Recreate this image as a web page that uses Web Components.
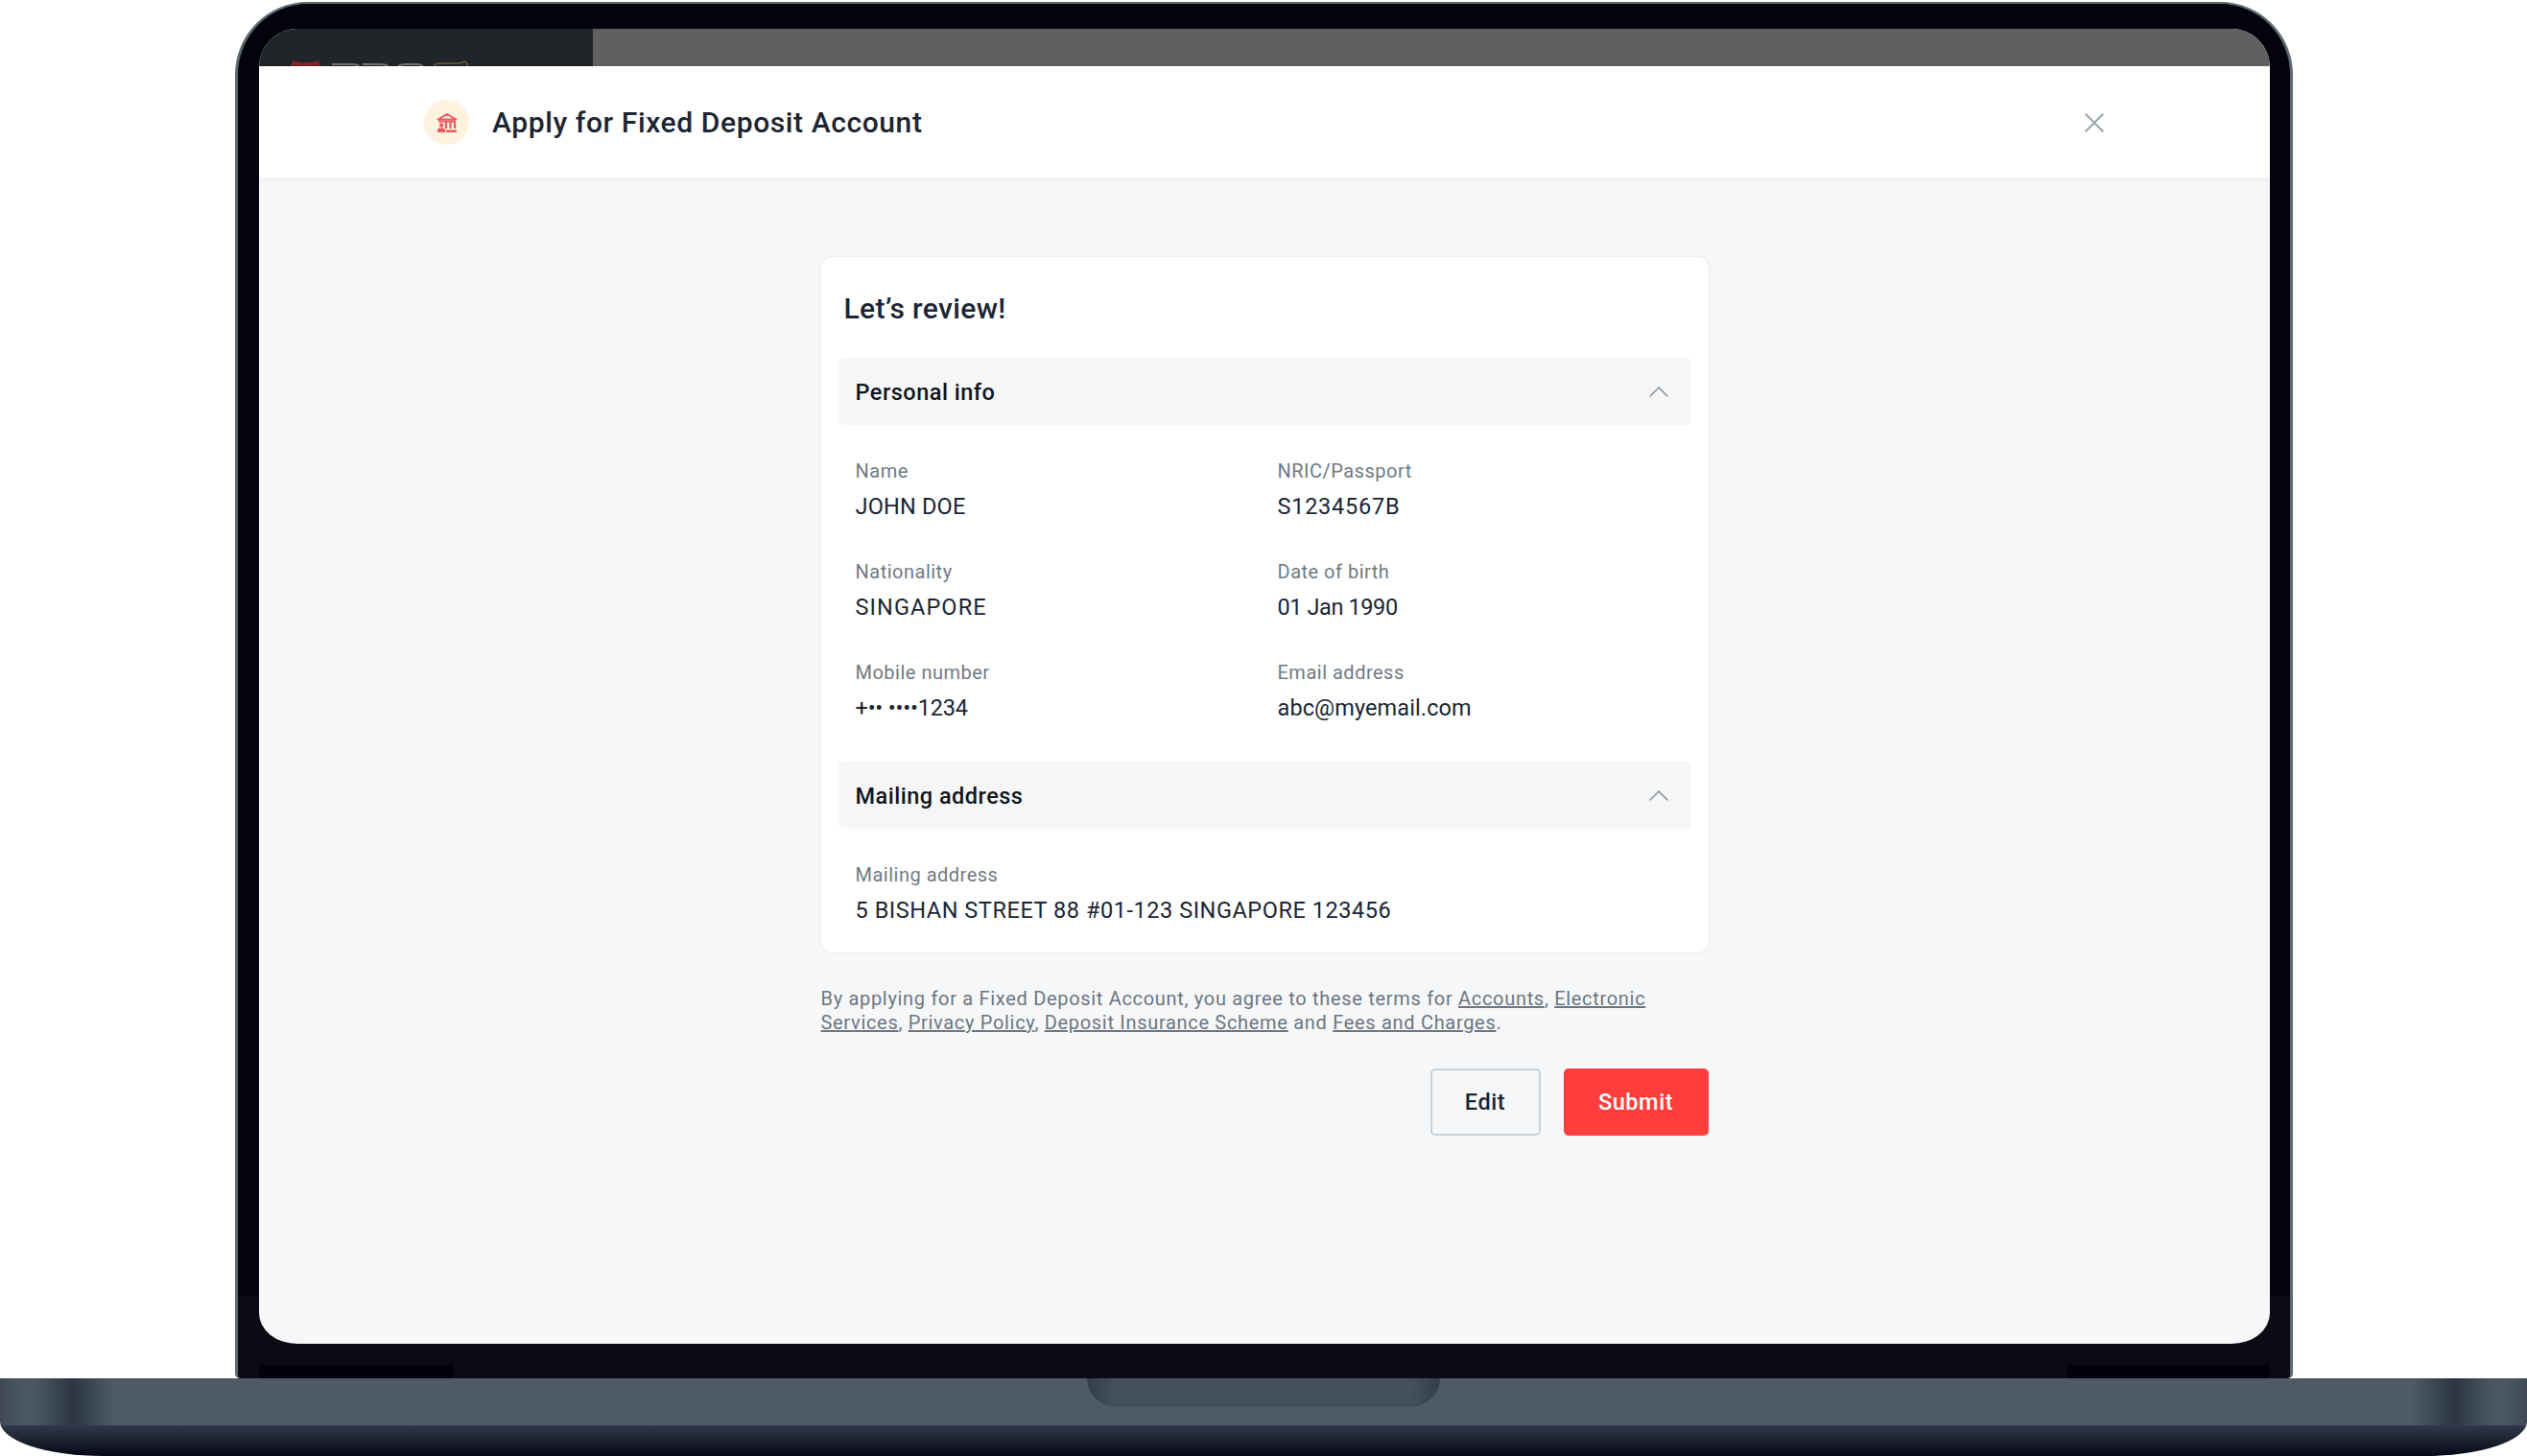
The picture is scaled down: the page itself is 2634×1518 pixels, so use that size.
<!DOCTYPE html>
<html>
<head>
<meta charset="utf-8">
<title>Apply for Fixed Deposit Account</title>
<style>
  html, body { margin: 0; background: #fff; overflow: hidden; }
  body { font-family: Roboto, "Liberation Sans", sans-serif; color: #1b2533; }
  a { color: inherit; }
</style>
</head>
<body>
<laptop-frame>
  <modal-header title="Apply for Fixed Deposit Account"></modal-header>
  <review-page>
    <review-card heading="Let’s review!">
      <review-section title="Personal info">
        <info-field label="Name" value="JOHN DOE"></info-field>
        <info-field label="NRIC/Passport" value="S1234567B" style="--track:.75px"></info-field>
        <info-field label="Nationality" value="SINGAPORE" style="--track:1.1px"></info-field>
        <info-field label="Date of birth" value="01 Jan 1990" style="--track:-.4px"></info-field>
        <info-field label="Mobile number" value="+•• ••••1234" style="--track:-.2px"></info-field>
        <info-field label="Email address" value="abc@myemail.com" style="--track:.1px"></info-field>
      </review-section>
      <review-section title="Mailing address">
        <info-field wide label="Mailing address" value="5 BISHAN STREET 88 #01-123 SINGAPORE 123456" style="--track:.55px"></info-field>
      </review-section>
    </review-card>
    <terms-note>By applying for a Fixed Deposit Account, you agree to these terms for <a href="#">Accounts</a>, <a href="#">Electronic</a> <a href="#">Services</a>, <a href="#">Privacy Policy</a>, <a href="#">Deposit Insurance Scheme</a> and <a href="#">Fees and Charges</a>.</terms-note>
    <form-actions>
      <action-button>Edit</action-button>
      <action-button primary>Submit</action-button>
    </form-actions>
  </review-page>
</laptop-frame>

<script>
class LaptopFrame extends HTMLElement {
    constructor() {
        super();
        this.attachShadow({mode: 'open'}).innerHTML = `
            <style>
                :host { display: flex; flex-direction: column; align-items: center; width: 2634px; height: 1518px; padding-top: 2px; box-sizing: border-box; }
                .bezel {
                    box-sizing: border-box;
                    width: 2145px;
                    height: 1435px;
                    margin-left: 1px;
                    padding: 26px 21px 36px 22px;
                    border: solid #5d6a70;
                    border-width: 2px 3px 0 3px;
                    border-radius: 76px 76px 5px 5px;
                    background:
                        linear-gradient(#02020c, #02020c) no-repeat left 22px bottom / 203px 14px,
                        linear-gradient(#02020c, #02020c) no-repeat right 21px bottom / 211px 14px,
                        linear-gradient(#02030c 0, #02030c 94%, #0a0b14 94%);
                }
                .screen {
                    display: flex;
                    flex-direction: column;
                    height: 100%;
                    overflow: hidden;
                    border-radius: 40px 40px 40px 40px / 40px 40px 32px 32px;
                    background: #f6f7f9;
                }
                .behind { display: flex; flex: 0 0 39px; overflow: hidden; }
                .side { flex: 0 0 348px; background: #1f2528; overflow: hidden; }
                .side svg { display: block; margin: 33px 0 0 33px; }
                .rest { flex: 1; background: #5f605f; }
                .base { flex: 0 0 81px; width: 2634px; overflow: hidden; border-radius: 0 0 107px 107px / 0 0 36px 36px; display: flex; flex-direction: column; }
                .top {
                    flex: 0 0 49px;
                    display: flex;
                    justify-content: center;
                    background: linear-gradient(90deg, #3f4a56 0, #4b5864 24px, #4b5864 36px, #2c3644 76px, #4e5b66 120px, #4e5b66 2514px, #2c3644 2558px, #4b5864 2598px, #4b5864 2610px, #3f4a56 100%);
                }
                .notch {
                    width: 368px;
                    height: 30px;
                    border-radius: 0 0 32px 32px / 0 0 30px 30px;
                    background: linear-gradient(90deg, #323e4b, #44515d 30px, #44515d 338px, #323e4b);
                }
                .bottom { flex: 1; background: linear-gradient(#2f3a4a, #060816); }
            </style>
            <div class="bezel">
                <div class="screen">
                    <div class="behind">
                        <div class="side">
                            <svg width="200" height="6" viewBox="0 0 200 6" fill="none">
                                <path d="M0 6 2 0l8 2h11l8-2 2 6z" fill="#7d2528"/>
                                <path d="M43 4h20q6 0 8 2M75 4h18q6 0 8 2M112 6q3-2 9-2h10q4 0 7 2" stroke="#6f7172" stroke-width="2"/>
                                <path d="M149 6q2-3 7-3h20l6-2M182 1l3 5" stroke="#5d4d36" stroke-width="2"/>
                            </svg>
                        </div>
                        <div class="rest"></div>
                    </div>
                    <slot></slot>
                </div>
            </div>
            <div class="base">
                <div class="top"><div class="notch"></div></div>
                <div class="bottom"></div>
            </div>
        `;
    }
}
customElements.define('laptop-frame', LaptopFrame);

class ModalHeader extends HTMLElement {
    connectedCallback() {
        this.attachShadow({mode: 'open'}).innerHTML = `
            <style>
                :host { display: flex; align-items: center; flex: 0 0 117px; box-sizing: border-box; padding: 0 173px 0 172px; background: #fff; box-shadow: 0 1px 4px rgba(30,40,60,.08); z-index: 1; }
                .badge { display: flex; align-items: center; justify-content: center; width: 47px; height: 47px; border-radius: 50%; background: #fff3e0; margin-right: 24px; }
                h1 { flex: 1; margin: 0; font: 500 30px/40px Roboto, sans-serif; letter-spacing: .6px; color: #1b2533; }
                .close { display: block; }
            </style>
            <div class="badge">
                <svg width="22" height="22" viewBox="0 0 22 22" fill="none" stroke="#ef5a60" stroke-width="2">
                    <path d="M1.500 7.500 11 2l9.500 5.500z" stroke-linejoin="round"/>
                    <path d="M2 9.500h18" />
                    <path d="M10 10v7M14.500 10v7M19 10v7" stroke-width="2.200"/>
                    <circle cx="5" cy="13.500" r="2.200" fill="#ef5a60" stroke="none"/>
                    <path d="M1 21v-2.500q0-2 2-2h4q2 0 2 2V21zM10 18.500h11V21H10z" fill="#ef5a60" stroke="none"/>
                </svg>
            </div>
            <h1>${this.getAttribute('title')}</h1>
            <svg class="close" width="20" height="20" viewBox="0 0 20 20" stroke="#98a4ad" stroke-width="2" fill="none"><path d="M.700.700l18.600 18.600M19.300.700L.700 19.300"/></svg>
        `;
    }
}
customElements.define('modal-header', ModalHeader);

class ReviewPage extends HTMLElement {
    constructor() {
        super();
        this.attachShadow({mode: 'open'}).innerHTML = `
            <style>
                :host { display: flex; flex-direction: column; flex: 1; width: 925px; margin: 0 auto; padding-top: 82px; }
            </style>
            <slot></slot>
        `;
    }
}
customElements.define('review-page', ReviewPage);

class ReviewCard extends HTMLElement {
    connectedCallback() {
        this.attachShadow({mode: 'open'}).innerHTML = `
            <style>
                :host { display: block; background: #fff; border-radius: 12px; padding: 0 18px 24px; box-shadow: 0 0 3px rgba(30,40,60,.1); }
                h2 { margin: 0; padding: 34px 0 0 6px; height: 105px; box-sizing: border-box; font: 500 30px/40px Roboto, sans-serif; color: #1b2533; letter-spacing: .35px; }
            </style>
            <h2>${this.getAttribute('heading')}</h2>
            <slot></slot>
        `;
    }
}
customElements.define('review-card', ReviewCard);

class ReviewSection extends HTMLElement {
    connectedCallback() {
        this.attachShadow({mode: 'open'}).innerHTML = `
            <style>
                :host { display: block; }
                .head { display: flex; align-items: center; justify-content: space-between; height: 70px; padding: 0 24px 0 18px; background: #f6f6f6; border-radius: 6px; }
                .title { font: 500 23.500px/30px Roboto, sans-serif; color: #10161f; letter-spacing: .5px; padding-top: 2px; }
                .grid { display: grid; grid-template-columns: 440px 1fr; row-gap: 33px; padding: 33px 17px 36px 18px; }
                :host(:last-of-type) .grid { padding-bottom: 0; }
            </style>
            <div class="head">
                <span class="title">${this.getAttribute('title')}</span>
                <svg width="20" height="11" viewBox="0 0 20 11" fill="none" stroke="#98a4ad" stroke-width="1.800"><path d="M.700 10.400 10 1l9.300 9.400"/></svg>
            </div>
            <div class="grid"><slot></slot></div>
        `;
    }
}
customElements.define('review-section', ReviewSection);

class InfoField extends HTMLElement {
    connectedCallback() {
        this.attachShadow({mode: 'open'}).innerHTML = `
            <style>
                :host { display: block; }
                :host([wide]) { grid-column: 1 / -1; }
                .label { font: 400 20px/30px Roboto, sans-serif; color: #6f7a84; letter-spacing: .5px; margin-bottom: 2px; }
                .value { font: 400 23.500px/40px Roboto, sans-serif; color: #1b2533; letter-spacing: var(--track, .2px); }
            </style>
            <div class="label">${this.getAttribute('label')}</div>
            <div class="value">${this.getAttribute('value')}</div>
        `;
    }
}
customElements.define('info-field', InfoField);

class TermsNote extends HTMLElement {
    constructor() {
        super();
        this.attachShadow({mode: 'open'}).innerHTML = `
            <style>
                :host { display: block; margin-top: 36px; font: 400 20px/25px Roboto, sans-serif; letter-spacing: .69px; color: #6c7680; }
            </style>
            <slot></slot>
        `;
    }
}
customElements.define('terms-note', TermsNote);

class FormActions extends HTMLElement {
    constructor() {
        super();
        this.attachShadow({mode: 'open'}).innerHTML = `
            <style>
                :host { display: flex; justify-content: flex-end; gap: 24px; margin-top: 35px; }
            </style>
            <slot></slot>
        `;
    }
}
customElements.define('form-actions', FormActions);

class ActionButton extends HTMLElement {
    constructor() {
        super();
        this.attachShadow({mode: 'open'}).innerHTML = `
            <style>
                :host { display: flex; align-items: center; justify-content: center; box-sizing: border-box; width: 115px; height: 70px; border: 2px solid #c8d0d8; border-radius: 5px; font: 500 23.500px/30px Roboto, sans-serif; letter-spacing: .55px; color: #1b2533; cursor: pointer; }
                :host([primary]) { width: 151px; border-color: #ff3d3d; background: #ff3d3d; color: #fff; }
            </style>
            <slot></slot>
        `;
    }
}
customElements.define('action-button', ActionButton);
</script>
</body>
</html>
